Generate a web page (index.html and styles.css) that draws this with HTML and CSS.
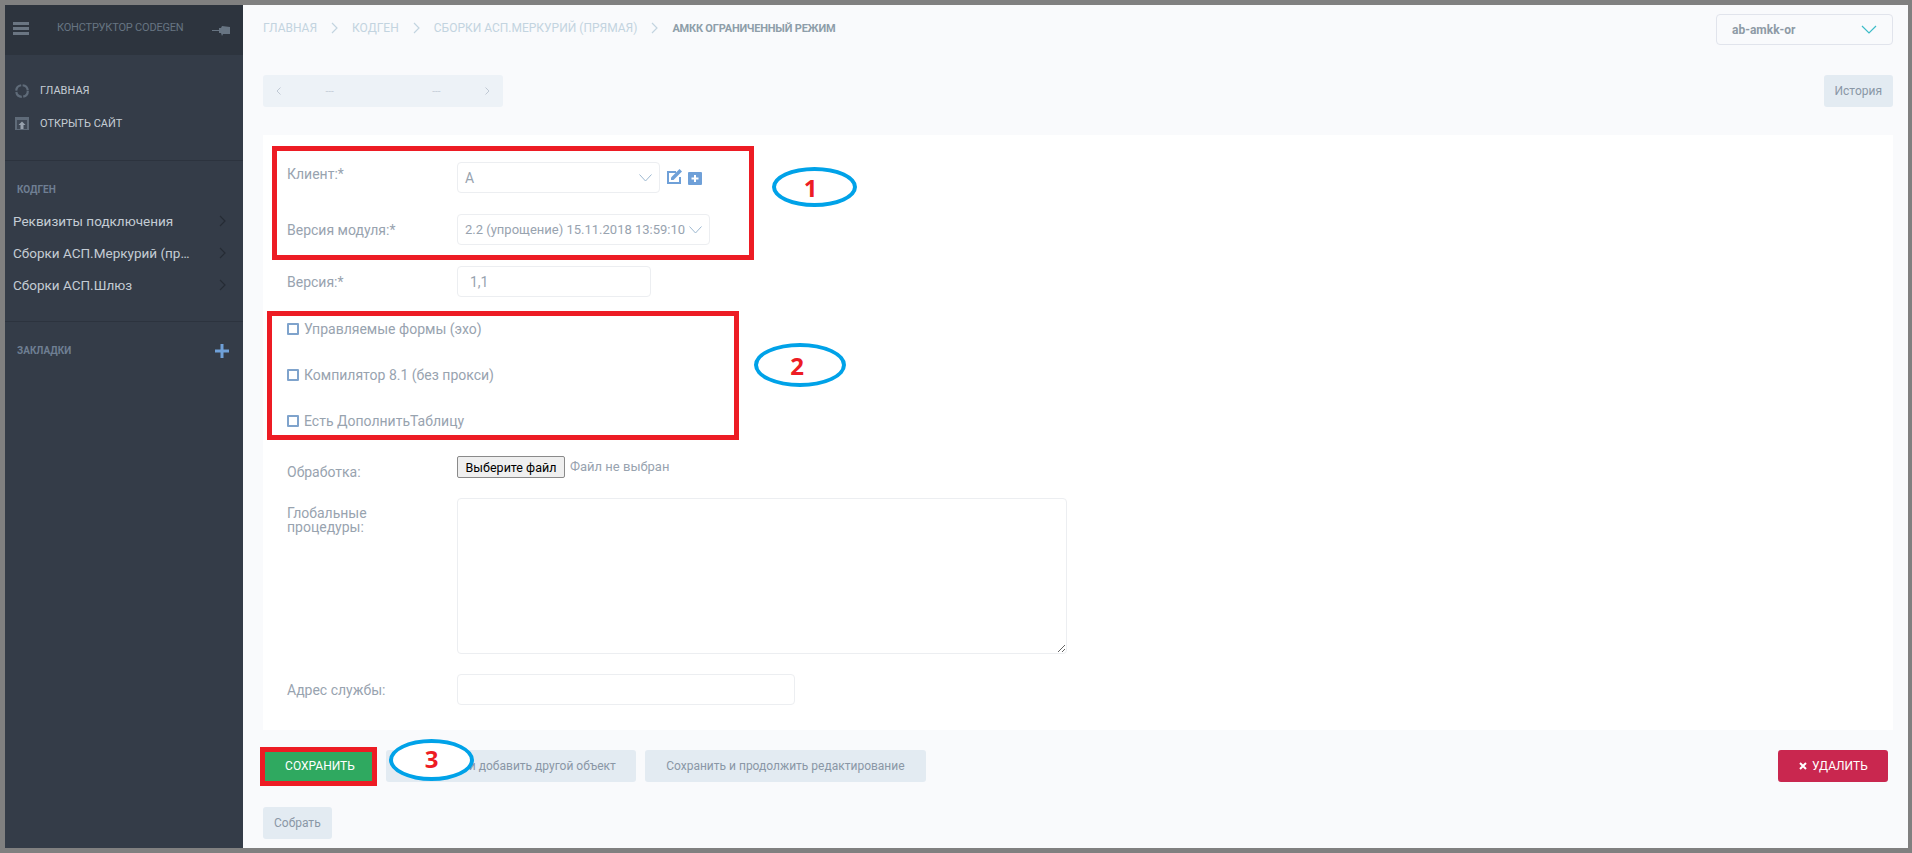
FILE: index.html
```html
<!DOCTYPE html>
<html lang="ru">
<head>
    <meta charset="UTF-8">
    <title>АМКК ограниченный режим</title>
    <link rel="stylesheet" href="styles.css">
</head>
<body>
    <div class="frame">
        <aside class="sidebar">
            <div class="side-header">
                <svg class="burger" width="16" height="13" viewBox="0 0 16 13"><rect width="16" height="3"/><rect y="5" width="16" height="3"/><rect y="10" width="16" height="3"/></svg>
                <span class="side-title">КОНСТРУКТОР CODEGEN</span>
                <svg class="pin" width="18" height="12" viewBox="0 0 18 12"><path d="M0 6h7v1H0zM7 4h2l1-2 8 1v7l-7 0-1 2-1-3H7z"/></svg>
            </div>
            <nav class="side-top">
                <a class="top-link">
                    <svg width="14" height="14" viewBox="0 0 14 14"><circle cx="7" cy="7" r="5.800" fill="none" stroke="#5f6b79" stroke-width="2.200" stroke-dasharray="7.600 1.500"/></svg>
                    ГЛАВНАЯ
                </a>
                <a class="top-link">
                    <svg width="14" height="13" viewBox="0 0 14 13"><rect width="14" height="13" fill="#5f6b79"/><rect x="2" y="3" width="10" height="9" fill="#3f4855"/><path fill="#98a2ae" d="M7 4.500l3.500 3.500H8.500v4h-3V8H3.500z"/></svg>
                    ОТКРЫТЬ САЙТ
                </a>
            </nav>
            <div class="side-section">
                <h3 class="section-title">КОДГЕН</h3>
                <a class="side-item"><span class="item-text">Реквизиты подключения</span><svg class="chev" width="7" height="12" viewBox="0 0 7 12"><path d="M1 1l5 5-5 5"/></svg></a>
                <a class="side-item"><span class="item-text">Сборки АСП.Меркурий (прямая)</span><svg class="chev" width="7" height="12" viewBox="0 0 7 12"><path d="M1 1l5 5-5 5"/></svg></a>
                <a class="side-item"><span class="item-text">Сборки АСП.Шлюз</span><svg class="chev" width="7" height="12" viewBox="0 0 7 12"><path d="M1 1l5 5-5 5"/></svg></a>
            </div>
            <div class="side-bookmarks">
                <h3 class="section-title">ЗАКЛАДКИ</h3>
                <svg width="14" height="14" viewBox="0 0 14 14"><path fill="#6fa0d8" d="M5.500 0h3v5.500H14v3H8.500V14h-3V8.500H0v-3h5.500z"/></svg>
            </div>
        </aside>

        <main class="content">
            <div class="top-row">
                <div class="crumbs">
                    <span>ГЛАВНАЯ</span>
                    <svg class="crumb-sep" width="7" height="12" viewBox="0 0 7 12"><path d="M1 1l5 5-5 5"/></svg>
                    <span>КОДГЕН</span>
                    <svg class="crumb-sep" width="7" height="12" viewBox="0 0 7 12"><path d="M1 1l5 5-5 5"/></svg>
                    <span>СБОРКИ АСП.МЕРКУРИЙ (ПРЯМАЯ)</span>
                    <svg class="crumb-sep" width="7" height="12" viewBox="0 0 7 12"><path d="M1 1l5 5-5 5"/></svg>
                    <span class="crumb-current">АМКК ОГРАНИЧЕННЫЙ РЕЖИМ</span>
                </div>
                <div class="env-select">
                    <span>ab-amkk-or</span>
                    <svg width="16" height="9" viewBox="0 0 16 9"><path d="M1 1l7 7 7-7" fill="none" stroke="#3cbcc8" stroke-width="1.200"/></svg>
                </div>
            </div>

            <div class="tool-row">
                <div class="pager">
                    <svg width="5" height="8" viewBox="0 0 5 8"><path d="M4.500 .5L1 4l3.500 3.500"/></svg>
                    <div class="pager-mid"><span>---</span><span>---</span></div>
                    <svg width="5" height="8" viewBox="0 0 5 8"><path d="M.5 .5L4 4 .5 7.500"/></svg>
                </div>
                <button class="btn">История</button>
            </div>

            <form class="panel">
                <div class="row row-client">
                    <label class="row-label label-high">Клиент:*</label>
                    <div class="select select-client">
                        <span>A</span>
                        <svg width="13" height="8" viewBox="0 0 13 8"><path d="M.5 .5l6 6.500 6-6.500"/></svg>
                    </div>
                    <svg class="icon-edit" width="16" height="16" viewBox="0 0 16 16"><path fill="none" stroke="#6fa0d8" stroke-width="2" d="M1 4h8M1 3v12.500M0 15h13.500M13 9v7"/><path fill="#6fa0d8" d="M4 9.500L12.500 1l2.500 2.500L6.500 12H4z"/></svg>
                    <svg class="icon-plus" width="14" height="13" viewBox="0 0 14 13"><path fill="#6fa0d8" fill-rule="evenodd" d="M1 0h12a1 1 0 011 1v11a1 1 0 01-1 1H1a1 1 0 01-1-1V1a1 1 0 011-1zM6 3v2.500H3.500v2H6V10h2V7.500h2.500v-2H8V3z"/></svg>
                </div>
                <div class="row">
                    <label class="row-label">Версия модуля:*</label>
                    <div class="select select-version">
                        <span>2.2 (упрощение) 15.11.2018 13:59:10</span>
                        <svg width="13" height="8" viewBox="0 0 13 8"><path d="M.5 .5l6 6.500 6-6.500"/></svg>
                    </div>
                </div>
                <div class="row row-last-field">
                    <label class="row-label">Версия:*</label>
                    <div class="input input-version">1,1</div>
                </div>

                <div class="check-row"><span class="check"></span>Управляемые формы (эхо)</div>
                <div class="check-row"><span class="check"></span>Компилятор 8.1 (без прокси)</div>
                <div class="check-row check-last"><span class="check"></span>Есть ДополнитьТаблицу</div>

                <div class="row row-file">
                    <label class="row-label">Обработка:</label>
                    <button type="button" class="file-btn">Выберите файл</button>
                    <span class="file-name">Файл не выбран</span>
                </div>
                <div class="row row-area">
                    <label class="row-label area-label">Глобальные процедуры:</label>
                    <textarea class="area"></textarea>
                </div>
                <div class="row row-end">
                    <label class="row-label">Адрес службы:</label>
                    <div class="input input-addr"></div>
                </div>
            </form>

            <div class="actions">
                <button class="btn btn-save">СОХРАНИТЬ</button>
                <button class="btn btn-wide">Сохранить и добавить другой объект</button>
                <button class="btn btn-long">Сохранить и продолжить редактирование</button>
                <button class="btn btn-delete">
                    <svg width="8" height="8" viewBox="0 0 8 8"><path d="M1 1l6 6M7 1L1 7" stroke="#fff" stroke-width="2"/></svg>
                    УДАЛИТЬ
                </button>
            </div>
            <div class="build-row">
                <button class="btn">Собрать</button>
            </div>

            <!-- annotations drawn over the screen -->
            <div class="mark mark-box-1"></div>
            <div class="mark mark-box-2"></div>
            <div class="mark mark-box-3"></div>
            <div class="mark mark-oval mark-oval-1">1</div>
            <div class="mark mark-oval mark-oval-2">2</div>
            <div class="mark mark-oval mark-oval-3">3</div>
        </main>
    </div>
</body>
</html>
```

FILE: styles.css
```css
* {
    box-sizing: border-box;
}

body {
    margin: 0;
    background: #808080;
    font-family: Roboto, "Liberation Sans", Arial, sans-serif;
    font-size: 14px;
    color: #98a3af;
}

.frame {
    display: flex;
    height: 853px;
    padding: 5px 4px 5px 5px;
    overflow: hidden;
}

/* Sidebar */
.sidebar {
    width: 238px;
    flex: none;
    background: #343c48;
}

.side-header {
    display: flex;
    align-items: flex-start;
    height: 50px;
    padding: 17px 13px 0 8px;
    background: #2d343e;
}

.burger {
    fill: #6a7582;
    flex: none;
}

.side-title {
    margin-left: 28px;
    font-size: 11px;
    letter-spacing: -0.2px;
    line-height: 11px;
    color: #677482;
    white-space: nowrap;
}

.pin {
    margin-left: auto;
    margin-top: 2px;
    fill: #677482;
}

.side-top {
    height: 106px;
    padding-top: 19px;
    border-bottom: 1px solid #2c333e;
}

.top-link {
    display: flex;
    align-items: center;
    gap: 11px;
    height: 33px;
    padding-left: 10px;
    font-size: 11px;
    color: #c4ccd4;
}

.side-section {
    height: 161px;
    padding-top: 22px;
    border-bottom: 1px solid #2c333e;
}

.section-title {
    margin: 0;
    padding-left: 12px;
    font-size: 10px;
    line-height: 14px;
    font-weight: bold;
    color: #6f7f93;
}

.side-section .section-title {
    margin-bottom: 8px;
}

.side-item {
    display: flex;
    align-items: center;
    justify-content: space-between;
    height: 32px;
    padding: 0 17px 0 8px;
    font-size: 13.500px;
    color: #c4ccd4;
}

.item-text {
    width: 178px;
    white-space: nowrap;
    overflow: hidden;
    text-overflow: ellipsis;
}

.chev {
    fill: none;
    stroke: #262c35;
    stroke-width: 1.200;
}

.side-bookmarks {
    display: flex;
    align-items: center;
    justify-content: space-between;
    padding: 22px 14px 0 0;
}

/* Main column */
.content {
    position: relative;
    flex: 1;
    padding: 9px 15px 0 20px;
    background: #f9fafc;
}

.top-row {
    display: flex;
    align-items: center;
    justify-content: space-between;
    height: 31px;
    margin-bottom: 30px;
}

.crumbs {
    display: flex;
    align-items: center;
    gap: 14px;
    margin-top: -3px;
    font-size: 12px;
    color: #c3d4e0;
}

.crumb-sep {
    fill: none;
    stroke: #c3d4e0;
    stroke-width: 1.200;
}

.crumb-current {
    font-size: 11px;
    letter-spacing: -0.2px;
    font-weight: bold;
    color: #8e9ea9;
}

.env-select {
    display: flex;
    align-items: center;
    justify-content: space-between;
    width: 177px;
    height: 31px;
    padding: 0 15px;
    border: 1px solid #e1e4ec;
    border-radius: 4px;
    font-size: 12px;
    font-weight: bold;
    color: #8e9aa6;
}

.tool-row {
    display: flex;
    justify-content: space-between;
    height: 32px;
    margin-bottom: 28px;
}

.pager {
    display: flex;
    align-items: center;
    justify-content: space-between;
    width: 240px;
    padding: 0 13px;
    background: #edf2f7;
    border-radius: 3px;
    font-size: 10px;
    color: #c5ced8;
}

.pager svg {
    fill: none;
    stroke: #c0c9d4;
}

.pager-mid {
    display: flex;
    justify-content: space-between;
    width: 115px;
}

.btn {
    height: 32px;
    padding: 0 11px;
    border: none;
    border-radius: 3px;
    background: #e3ebf2;
    font-family: inherit;
    font-size: 12px;
    color: #8a97a6;
    white-space: nowrap;
}

/* Form */
.panel {
    height: 595px;
    padding: 27px 24px 0;
    background: #fff;
}

.row {
    display: flex;
    align-items: flex-start;
    margin-bottom: 21px;
}

.row-label {
    flex: none;
    width: 170px;
    padding-top: 8px;
    line-height: 16px;
}

.label-high {
    padding-top: 4px;
}

.select,
.input {
    display: flex;
    align-items: center;
    height: 31px;
    border: 1px solid #eceef1;
    border-radius: 4px;
    background: #fff;
}

.select {
    justify-content: space-between;
    padding: 0 7px;
}

.select svg {
    flex: none;
    fill: none;
    stroke: #9db8d0;
}

.select-client {
    width: 203px;
}

.select-version {
    width: 253px;
    font-size: 13px;
    white-space: nowrap;
}

.icon-edit {
    margin: 6px 0 0 7px;
}

.icon-plus {
    margin: 10px 0 0 5px;
}

.input {
    padding-left: 12px;
}

.input-version {
    width: 194px;
}

.input-addr {
    width: 338px;
}

.row-last-field {
    margin-bottom: 22px;
}

.check-row {
    display: flex;
    align-items: center;
    gap: 5px;
    height: 20px;
    margin-bottom: 26px;
}

.check-last {
    margin-bottom: 25px;
}

.check {
    width: 12px;
    height: 12px;
    border: 2px solid #7fa3cc;
    border-radius: 1px;
}

.row-file {
    height: 22px;
    margin-bottom: 20px;
}

.file-btn {
    width: 108px;
    height: 22px;
    padding: 0;
    border: 1px solid #8a8a8a;
    border-radius: 2px;
    background: #efefef;
    font-family: Roboto, Arial, sans-serif;
    font-size: 12.500px;
    color: #000;
}

.file-name {
    margin-left: 5px;
    font-size: 13px;
    line-height: 22px;
}

.row-area {
    margin-bottom: 20px;
}

.area-label {
    padding-top: 8px;
    padding-right: 60px;
    line-height: 14px;
}

.area {
    display: block;
    width: 610px;
    height: 156px;
    border: 1px solid #eceef1;
    border-radius: 4px;
    background: #fff;
}

.row-end {
    margin-bottom: 0;
}

/* Buttons below the form */
.actions {
    display: flex;
    gap: 9px;
    margin-top: 20px;
    padding-right: 5px;
}

.btn-save {
    width: 114px;
    background: #2fa960;
    color: #fff;
}

.btn-wide {
    padding: 0 20px;
}

.btn-long {
    width: 281px;
}

.btn-delete {
    display: flex;
    align-items: center;
    gap: 5px;
    width: 110px;
    margin-left: auto;
    padding-left: 21px;
    background: #c9274f;
    color: #fff;
    font-size: 12px;
}

.build-row {
    margin-top: 25px;
}

/* Annotations */
.mark {
    position: absolute;
    border: 5px solid #ed1c24;
}

.mark-box-1 {
    left: 29px;
    top: 141px;
    width: 482px;
    height: 114px;
}

.mark-box-2 {
    left: 24px;
    top: 306px;
    width: 472px;
    height: 129px;
}

.mark-box-3 {
    left: 17px;
    top: 742px;
    width: 117px;
    height: 39px;
}

.mark-oval {
    display: flex;
    align-items: center;
    justify-content: center;
    border: 4px solid #00a2e8;
    border-radius: 50%;
    background: #fff;
    font-family: "Open Sans", sans-serif;
    font-size: 24px;
    font-weight: bold;
    color: #ed1c24;
}

.mark-oval-1 {
    left: 529px;
    top: 162px;
    width: 85px;
    height: 40px;
    padding-right: 8px;
}

.mark-oval-2 {
    left: 511px;
    top: 338px;
    width: 92px;
    height: 44px;
    padding-right: 6px;
}

.mark-oval-3 {
    left: 146px;
    top: 734px;
    width: 85px;
    height: 42px;
    padding-bottom: 4px;
}
```
